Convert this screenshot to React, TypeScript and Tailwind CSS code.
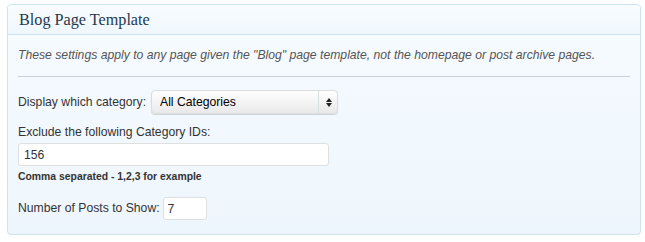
import { useState } from "react";

const sans = "font-['Liberation_Sans',Arial,sans-serif]";

export default function App() {
  const [category, setCategory] = useState("All Categories");
  const [exclude, setExclude] = useState("156");
  const [posts, setPosts] = useState("7");

  return (
    <div className={`w-[645px] h-[242px] bg-white pt-1 pl-[7px] ${sans}`}>
      <div className="w-[634px] h-[231px] rounded-[4px] border border-[#cde3ee] bg-gradient-to-b from-[#f6fbff] to-[#eef6fd] overflow-hidden">
        {/* Header */}
        <div className="h-[30px] border-b border-[#cde3ee] bg-gradient-to-b from-[#f9fcff] to-[#eff7fd] pl-[11px] pt-[5px]">
          <h3 className="font-['Liberation_Serif',Georgia,serif] text-[16.2px] leading-[20px] text-[#1f3a4c]">
            Blog Page Template
          </h3>
        </div>

        <div className="px-[10px]">
          <p className="mt-[13px] text-[12.2px] leading-[15px] italic text-[#555]">
            These settings apply to any page given the "Blog" page template, not the homepage or post archive pages.
          </p>
          <div className="mt-[13px] h-px w-[612px] bg-[#c9cfd3]" />

          {/* Category select */}
          <div className="mt-[13px] flex items-center gap-[5px] text-[12.2px] text-[#333]">
            <span>Display which category:</span>
            <div className="relative">
              <select
                value={category}
                onChange={(e) => setCategory(e.target.value)}
                className="appearance-none w-[187px] h-[24px] rounded-[4px] border border-[#d8dde0] bg-gradient-to-b from-white to-[#e9e9e9] pl-[8px] text-[12.2px] text-black shadow-[0_1px_1px_rgba(0,0,0,0.15)] outline-none"
              >
                <option>All Categories</option>
              </select>
              <div className="pointer-events-none absolute right-0 top-0 flex h-[24px] w-[20px] flex-col items-center justify-center gap-[1px] border-l border-[#d8dde0]">
                <svg width="6" height="4" viewBox="0 0 6 4"><path d="M0 4 L3 0 L6 4 Z" fill="#222" /></svg>
                <svg width="6" height="4" viewBox="0 0 6 4"><path d="M0 0 L3 4 L6 0 Z" fill="#222" /></svg>
              </div>
            </div>
          </div>

          {/* Exclude IDs */}
          <div className="mt-[11px] text-[12.2px] leading-[15px] text-[#333]">Exclude the following Category IDs:</div>
          <input
            value={exclude}
            onChange={(e) => setExclude(e.target.value)}
            className="mt-[3px] block w-[311px] h-[23px] rounded-[3px] border border-[#dfdfdf] bg-white px-[5px] text-[12.2px] text-[#333] outline-none"
          />
          <div className="mt-[4px] text-[10.4px] leading-[13px] font-bold text-[#333]">Comma separated - 1,2,3 for example</div>

          {/* Number of posts */}
          <div className="mt-[14px] flex items-center gap-[3px] text-[12.2px] text-[#333]">
            <span>Number of Posts to Show:</span>
            <input
              value={posts}
              onChange={(e) => setPosts(e.target.value)}
              className="w-[44px] h-[23px] rounded-[3px] border border-[#dfdfdf] bg-white px-[4px] text-[12.2px] text-[#333] outline-none"
            />
          </div>
        </div>
      </div>
    </div>
  );
}
